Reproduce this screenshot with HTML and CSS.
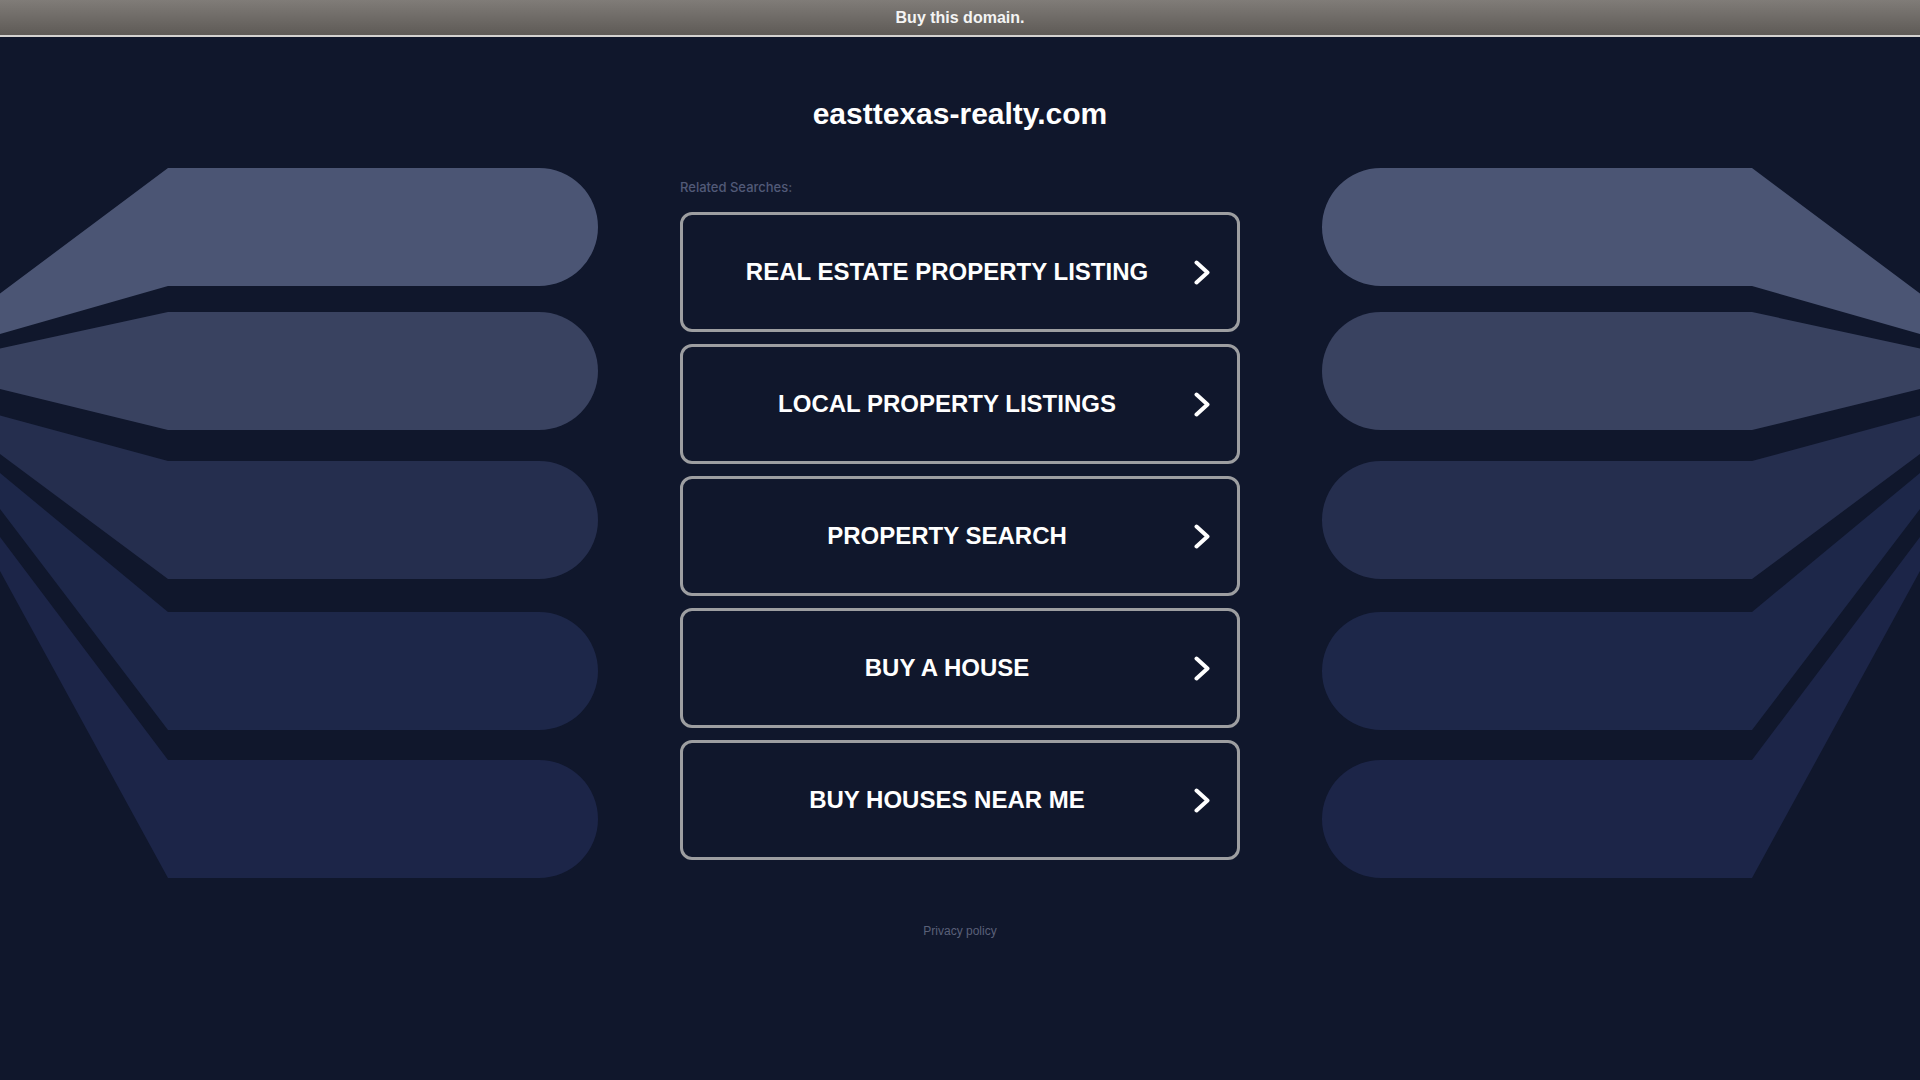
FILE: index.html
```html
<!DOCTYPE html>
<html lang="en">
<head>
<meta charset="utf-8">
<title>easttexas-realty.com</title>
<link rel="stylesheet" href="styles.css">
</head>
<body>
<header class="topbar"><a class="buy-link" href="#">Buy this domain.</a></header>
<h1 class="domain">easttexas-realty.com</h1>
<main class="stage">
  <svg class="deco deco-left" viewBox="0 0 598 710" width="598" height="710" aria-hidden="true">
    <path fill="#4b5574" d="M168 0H539A59 59 0 0 1 539 118H168L0 166V125.5Z"/>
    <path fill="#394260" d="M168 144H539A59 59 0 0 1 539 262H168L0 221V180.5Z"/>
    <path fill="#252e4e" d="M168 293H539A59 59 0 0 1 539 411H168L0 286V247.5Z"/>
    <path fill="#1d2749" d="M168 444H539A59 59 0 0 1 539 562H168L0 341V305Z"/>
    <path fill="#1c2548" d="M168 592H539A59 59 0 0 1 539 710H168L0 403V369Z"/>
  </svg>
  <section class="center">
    <p class="related">Related Searches:</p>
    <nav class="links">
      <a class="link-btn" href="#"><span class="label">REAL ESTATE PROPERTY LISTING</span><svg class="chev" viewBox="0 0 16 25" width="16" height="25"><path d="M2.5 2.5L13.5 12.5L2.5 22.5" fill="none" stroke="#fff" stroke-width="4" stroke-linecap="round" stroke-linejoin="round"/></svg></a>
      <a class="link-btn" href="#"><span class="label">LOCAL PROPERTY LISTINGS</span><svg class="chev" viewBox="0 0 16 25" width="16" height="25"><path d="M2.5 2.5L13.5 12.5L2.5 22.5" fill="none" stroke="#fff" stroke-width="4" stroke-linecap="round" stroke-linejoin="round"/></svg></a>
      <a class="link-btn" href="#"><span class="label">PROPERTY SEARCH</span><svg class="chev" viewBox="0 0 16 25" width="16" height="25"><path d="M2.5 2.5L13.5 12.5L2.5 22.5" fill="none" stroke="#fff" stroke-width="4" stroke-linecap="round" stroke-linejoin="round"/></svg></a>
      <a class="link-btn" href="#"><span class="label">BUY A HOUSE</span><svg class="chev" viewBox="0 0 16 25" width="16" height="25"><path d="M2.5 2.5L13.5 12.5L2.5 22.5" fill="none" stroke="#fff" stroke-width="4" stroke-linecap="round" stroke-linejoin="round"/></svg></a>
      <a class="link-btn" href="#"><span class="label">BUY HOUSES NEAR ME</span><svg class="chev" viewBox="0 0 16 25" width="16" height="25"><path d="M2.5 2.5L13.5 12.5L2.5 22.5" fill="none" stroke="#fff" stroke-width="4" stroke-linecap="round" stroke-linejoin="round"/></svg></a>
    </nav>
    <footer class="footer"><a class="privacy" href="#">Privacy policy</a></footer>
  </section>
  <svg class="deco deco-right" viewBox="0 0 598 710" width="598" height="710" aria-hidden="true">
    <path fill="#4b5574" d="M168 0H539A59 59 0 0 1 539 118H168L0 166V125.5Z"/>
    <path fill="#394260" d="M168 144H539A59 59 0 0 1 539 262H168L0 221V180.5Z"/>
    <path fill="#252e4e" d="M168 293H539A59 59 0 0 1 539 411H168L0 286V247.5Z"/>
    <path fill="#1d2749" d="M168 444H539A59 59 0 0 1 539 562H168L0 341V305Z"/>
    <path fill="#1c2548" d="M168 592H539A59 59 0 0 1 539 710H168L0 403V369Z"/>
  </svg>
</main>
</body>
</html>
```

FILE: styles.css
```css
html, body {
  margin: 0;
  padding: 0;
}

body {
  background: #10172c;
  font-family: "Liberation Sans", Arial, sans-serif;
  color: #fff;
  min-height: 1080px;
  overflow: hidden;
}

.topbar {
  height: 35px;
  border-bottom: 2px solid #d4d2d0;
  background: linear-gradient(to bottom, #807c78 0%, #5e5a56 100%);
  display: flex;
  align-items: center;
  justify-content: center;
}

.buy-link {
  color: #f4f4f4;
  font-weight: bold;
  font-size: 16px;
  line-height: 20px;
  text-decoration: none;
}

.domain {
  margin: 60px 0 37px;
  font-size: 30px;
  line-height: 34px;
  font-weight: bold;
  text-align: center;
  color: #fff;
}

.stage {
  display: grid;
  grid-template-columns: 1fr 560px 1fr;
  align-items: start;
}

.deco {
  display: block;
}

.deco-left {
  justify-self: start;
}

.deco-right {
  justify-self: end;
  transform: scaleX(-1);
}

.center {
  padding-top: 11px;
}

.related {
  margin: 0 0 17px;
  font-family: Inter, "Noto Sans", sans-serif;
  font-size: 13px;
  font-weight: 500;
  line-height: 16px;
  color: #525a78;
}

.links {
  display: flex;
  flex-direction: column;
  gap: 12px;
}

.link-btn {
  box-sizing: border-box;
  height: 120px;
  border: 3px solid #9d9ea1;
  border-radius: 12px;
  padding: 0 27px;
  display: flex;
  align-items: center;
  text-decoration: none;
  color: #fff;
}

.label {
  flex: 1;
  text-align: center;
  font-size: 24px;
  font-weight: bold;
  line-height: 28px;
}

.chev {
  flex: none;
  margin-left: 10px;
  display: block;
}

.footer {
  margin-top: 61px;
  text-align: center;
}

.privacy {
  font-size: 12px;
  line-height: 14px;
  color: #5a6078;
  text-decoration: none;
}
```
